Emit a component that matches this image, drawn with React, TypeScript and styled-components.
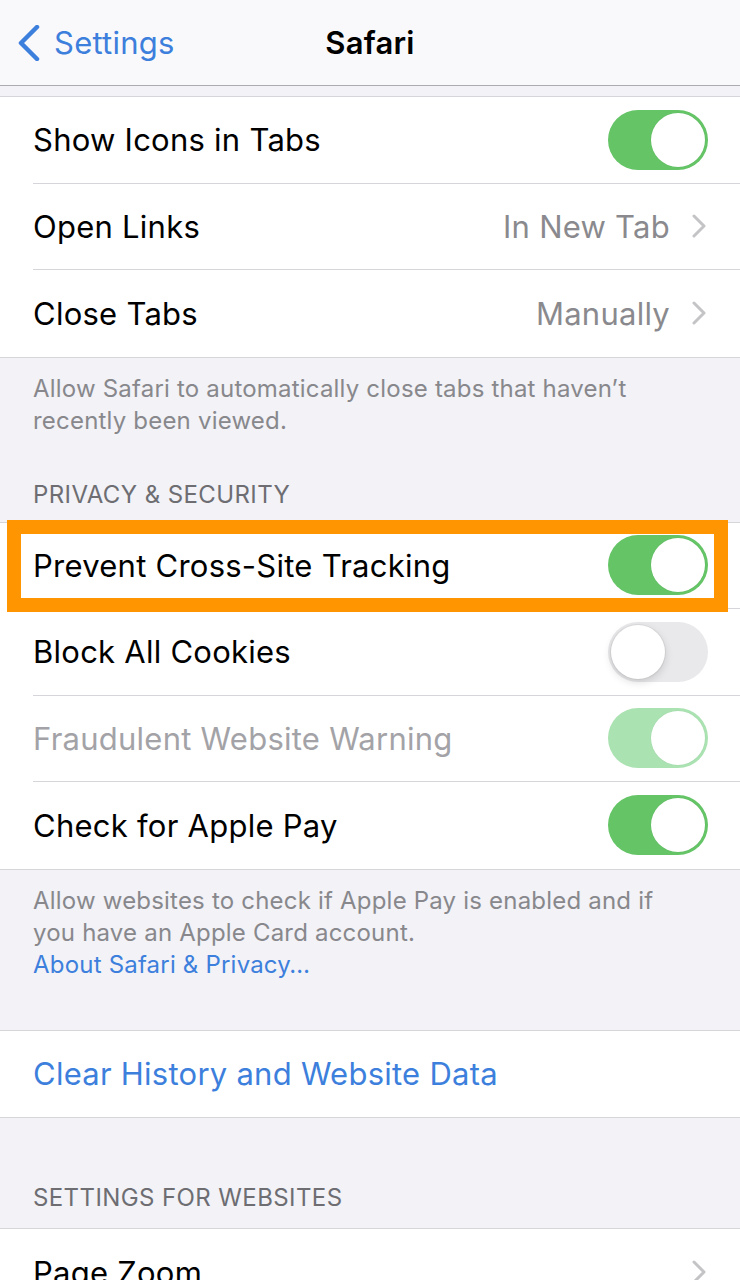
import React from 'react'
import styled, { createGlobalStyle } from 'styled-components'

const GlobalStyle = createGlobalStyle`
  html, body {
    margin: 0;
    padding: 0;
    background: #f2f2f7;
  }
  body {
    font-family: Inter, Roboto, "Liberation Sans", sans-serif;
    -webkit-font-smoothing: antialiased;
  }
`

const Screen = styled.div`
  width: 740px;
  height: 1280px;
  overflow: hidden;
  background: #f2f2f7;
`

const NavBar = styled.header`
  height: 85px;
  background: #f9f9fb;
  border-bottom: 1px solid #acacb0;
  display: grid;
  grid-template-columns: 1fr auto 1fr;
  align-items: center;
  margin-bottom: 10px;
`

const BackButton = styled.div`
  display: flex;
  align-items: center;
  gap: 14px;
  padding-left: 18px;
  color: #3d7fdc;
  font-size: 31px;
  letter-spacing: 0.25px;
`

const Title = styled.h1`
  margin: 0;
  font-size: 31px;
  font-weight: 600;
  letter-spacing: 0.25px;
  color: #000;
`

const Group = styled.section`
  background: #fff;
  border-top: 1px solid #d6d6da;
  border-bottom: 1px solid #d6d6da;
`

const RowInner = styled.div`
  flex: 1;
  display: flex;
  align-items: center;
  padding-right: 34px;
`

const Row = styled.div`
  position: relative;
  height: 86.5px;
  padding-left: 33px;
  display: flex;

  &:not(:last-child) > ${RowInner} {
    border-bottom: 1px solid #d6d6da;
  }
`

const Label = styled.span<{ $tone?: 'dim' | 'link' }>`
  flex: 1;
  font-size: 31px;
  letter-spacing: 0.25px;
  color: ${p => (p.$tone === 'dim' ? '#a3a3a7' : p.$tone === 'link' ? '#3d7fdc' : '#000')};
`

const Value = styled.span`
  font-size: 31px;
  letter-spacing: 0.25px;
  color: #8a8a8e;
  margin-right: 22px;
`

const Footer = styled.p<{ $bottom: number }>`
  margin: 0;
  padding: 15px 82px ${p => p.$bottom}px 33px;
  font-size: 24px;
  letter-spacing: 0.2px;
  line-height: 32px;
  color: #88888c;
`

const FooterLink = styled.span`
  display: block;
  color: #3d7fdc;
`

const SectionHeader = styled.h2<{ $top: number; $bottom: number }>`
  margin: 0;
  padding: ${p => p.$top}px 33px ${p => p.$bottom}px;
  font-size: 24px;
  letter-spacing: 0.4px;
  line-height: 32px;
  font-weight: 400;
  color: #6d6d72;
  text-transform: uppercase;
`

// orange annotation frame drawn over the row
const Highlight = styled.div`
  position: absolute;
  z-index: 2;
  top: -3px;
  bottom: -3px;
  left: 7px;
  right: 12px;
  border: 14px solid #ff9500;
  pointer-events: none;
`

const Track = styled.div<{ $on: boolean; $dim?: boolean }>`
  position: relative;
  width: 100px;
  height: 60px;
  border-radius: 30px;
  background: ${p => (p.$on ? (p.$dim ? '#abe2b2' : '#64c466') : '#e9e9eb')};
  flex-shrink: 0;
  margin-right: -2px;
`

const Knob = styled.div<{ $on: boolean }>`
  position: absolute;
  top: 3px;
  left: ${p => (p.$on ? '43px' : '3px')};
  width: 54px;
  height: 54px;
  border-radius: 50%;
  background: #fff;
  box-shadow: ${p =>
    p.$on ? '0 0 0 0.5px rgba(0,0,0,0.04)' : '0 3px 8px rgba(0,0,0,0.15), 0 0 0 1px rgba(0,0,0,0.05)'};
`

const Toggle = ({ on, dim }: { on: boolean; dim?: boolean }) => (
  <Track $on={on} $dim={dim}>
    <Knob $on={on} />
  </Track>
)

const Chevron = ({ color = '#c4c4c7' }: { color?: string }) => (
  <svg width="14" height="24" viewBox="0 0 14 24">
    <polyline points="2,2 12,12 2,22" fill="none" stroke={color} strokeWidth="3" strokeLinecap="round" strokeLinejoin="round" />
  </svg>
)

const BackChevron = () => (
  <svg width="22" height="36" viewBox="0 0 22 36">
    <polyline points="19,2 3,18 19,34" fill="none" stroke="#3d7fdc" strokeWidth="4.5" strokeLinecap="round" strokeLinejoin="round" />
  </svg>
)

export default function App() {
  return (
    <Screen>
      <GlobalStyle />
      <NavBar>
        <BackButton>
          <BackChevron />
          Settings
        </BackButton>
        <Title>Safari</Title>
        <div />
      </NavBar>

      <Group>
        <Row>
          <RowInner>
            <Label>Show Icons in Tabs</Label>
            <Toggle on />
          </RowInner>
        </Row>
        <Row>
          <RowInner>
            <Label>Open Links</Label>
            <Value>In New Tab</Value>
            <Chevron />
          </RowInner>
        </Row>
        <Row>
          <RowInner>
            <Label>Close Tabs</Label>
            <Value>Manually</Value>
            <Chevron />
          </RowInner>
        </Row>
      </Group>
      <Footer $bottom={0}>Allow Safari to automatically close tabs that haven’t recently been viewed.</Footer>

      <SectionHeader $top={42} $bottom={11}>Privacy &amp; Security</SectionHeader>
      <Group>
        <Row>
          <RowInner>
            <Label>Prevent Cross-Site Tracking</Label>
            <Toggle on />
          </RowInner>
          <Highlight />
        </Row>
        <Row>
          <RowInner>
            <Label>Block All Cookies</Label>
            <Toggle on={false} />
          </RowInner>
        </Row>
        <Row>
          <RowInner>
            <Label $tone="dim">Fraudulent Website Warning</Label>
            <Toggle on dim />
          </RowInner>
        </Row>
        <Row>
          <RowInner>
            <Label>Check for Apple Pay</Label>
            <Toggle on />
          </RowInner>
        </Row>
      </Group>
      <Footer $bottom={49}>
        Allow websites to check if Apple Pay is enabled and if you have an Apple Card account.
        <FooterLink>About Safari &amp; Privacy…</FooterLink>
      </Footer>

      <Group>
        <Row>
          <RowInner>
            <Label $tone="link">Clear History and Website Data</Label>
          </RowInner>
        </Row>
      </Group>

      <SectionHeader $top={64} $bottom={14}>Settings for Websites</SectionHeader>
      <Group>
        <Row>
          <RowInner>
            <Label>Page Zoom</Label>
            <Chevron />
          </RowInner>
        </Row>
      </Group>
    </Screen>
  )
}
